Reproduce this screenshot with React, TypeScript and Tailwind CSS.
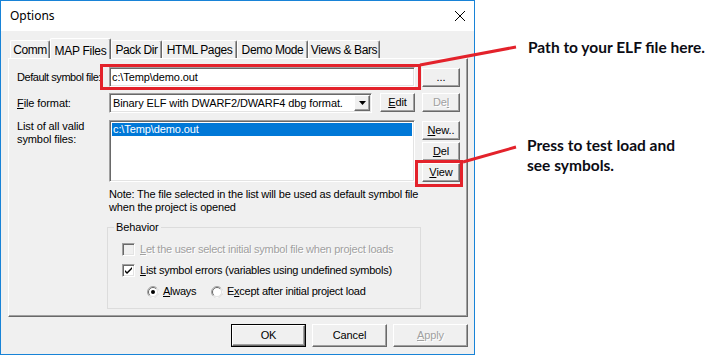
import React from "react";

const raised =
  "bg-[#f0f0f0] border border-t-white border-l-white border-r-[#696969] border-b-[#696969] shadow-[inset_-1px_-1px_0_#a0a0a0]";
const sunken =
  "border border-t-[#a0a0a0] border-l-[#a0a0a0] border-r-white border-b-white shadow-[inset_1px_1px_0_#696969,inset_-1px_-1px_0_#e3e3e3]";
const dis = "text-[#a0a0a0] [text-shadow:1px_1px_0_#fff]";

type BtnProps = {
  children: React.ReactNode;
  className: string;
  disabled?: boolean;
};

const Btn = ({ children, className, disabled }: BtnProps) => (
  <div
    className={`${raised} ${className} flex items-center justify-center ${
      disabled ? dis : "text-black"
    }`}
  >
    {children}
  </div>
);

const Check = ({ checked, disabled }: { checked?: boolean; disabled?: boolean }) => (
  <div
    className={`${sunken} w-[13px] h-[13px] shrink-0 flex items-center justify-center ${
      disabled ? "bg-[#f0f0f0]" : "bg-white"
    }`}
  >
    {checked && (
      <svg width="7" height="7" viewBox="0 0 7 7">
        <path d="M0 3 L2 5 L7 0 L7 2 L2 7 L0 5 Z" fill="#000" />
      </svg>
    )}
  </div>
);

const Radio = ({ checked }: { checked?: boolean }) => (
  <svg width="12" height="12" viewBox="0 0 12 12" className="shrink-0">
    <circle cx="6" cy="6" r="5.5" fill="#fff" stroke="#a0a0a0" />
    <path d="M9.9 2.1 A5.5 5.5 0 0 1 2.1 9.9" fill="none" stroke="#fff" />
    <path d="M2.8 9.2 A4.5 4.5 0 0 1 9.2 2.8" fill="none" stroke="#696969" />
    <path d="M9.2 2.8 A4.5 4.5 0 0 1 2.8 9.2" fill="none" stroke="#e3e3e3" />
    {checked && <circle cx="6" cy="6" r="2" fill="#000" />}
  </svg>
);

const tabs = [
  { label: "Comm", w: "w-[40px]" },
  { label: "MAP Files", w: "w-[61px]", active: true },
  { label: "Pack Dir", w: "w-[51px]" },
  { label: "HTML Pages", w: "w-[75px]" },
  { label: "Demo Mode", w: "w-[71px]" },
  { label: "Views & Bars", w: "w-[72px]" },
];

const App = () => {
  return (
    <div className="relative w-[718px] h-[355px] bg-white flex overflow-hidden font-['Liberation_Sans',Arial,sans-serif] text-[11px] text-black">
      {/* dialog window */}
      <div className="w-[475px] h-[355px] border border-[#1883d7] flex flex-col tracking-[-0.1px]">
        <div className="h-[30px] bg-white flex items-center justify-between px-[9px]">
          <span className="font-['Noto_Sans',sans-serif] text-[12px] tracking-normal">Options</span>
          <svg width="10" height="10" viewBox="0 0 10 10">
            <path d="M0 0 L10 10 M10 0 L0 10" stroke="#000" strokeWidth="1" />
          </svg>
        </div>
        <div className="flex-1 bg-[#f0f0f0] pt-[7px] pl-[7px] pr-[6px] flex flex-col">
          {/* tabs */}
          <div className="relative z-10 h-[20px] flex items-end pl-[2px] whitespace-nowrap">
            {tabs.map((t) =>
              t.active ? (
                <div
                  key={t.label}
                  className={`${t.w} h-[21px] -mb-px bg-[#f0f0f0] border-t border-l border-t-white border-l-white border-r border-r-[#696969] shadow-[inset_-1px_0_0_#a0a0a0] rounded-t-[2px] flex items-start justify-center pt-[3px] text-[12px] tracking-[-0.3px]`}
                >
                  {t.label}
                </div>
              ) : (
                <div
                  key={t.label}
                  className={`${t.w} h-[18px] bg-[#f0f0f0] border-t border-l border-t-white border-l-white border-r border-r-[#696969] shadow-[inset_-1px_0_0_#a0a0a0] rounded-t-[2px] flex items-center justify-center pt-px text-[12px] tracking-[-0.4px]`}
                >
                  {t.label}
                </div>
              )
            )}
          </div>
          {/* panel */}
          <div className="relative w-[460px] h-[259px] border border-t-white border-l-white border-r-[#696969] border-b-[#696969] shadow-[inset_-1px_-1px_0_#a0a0a0] pl-[8px] pt-[8px]">
            <div className="relative flex items-center h-[20px]">
              <div className="w-[92px] whitespace-nowrap tracking-[-0.45px]">Default symbol file:</div>
              <div className={`${sunken} w-[306px] h-[20px] bg-white flex items-center pl-[2px]`}>
                c:\Temp\demo.out
              </div>
              <Btn className="ml-[7px] w-[38px] h-[19px]">...</Btn>
              <div className="absolute left-[83px] top-[-3px] w-[321px] h-[26px] border-[3px] border-[#e3222b]" />
            </div>

            <div className="mt-[6px] flex items-start h-[20px]">
              <div className="w-[92px] h-[20px] flex items-center">
                <span>
                  <u>F</u>ile format:
                </span>
              </div>
              <div className={`${sunken} w-[263px] h-[20px] bg-white flex items-center justify-between pl-[3px] pr-[1px]`}>
                <span className="whitespace-nowrap">Binary ELF with DWARF2/DWARF4 dbg format.</span>
                <div className={`${raised} w-[16px] h-[16px] flex items-center justify-center`}>
                  <svg width="7" height="4" viewBox="0 0 7 4">
                    <path d="M0 0 L7 0 L3.5 4 Z" fill="#000" />
                  </svg>
                </div>
              </div>
              <Btn className="ml-[8px] w-[35px] h-[19px]">
                <span>
                  <u>E</u>dit
                </span>
              </Btn>
              <Btn className="ml-[7px] w-[38px] h-[19px]" disabled>
                <span>
                  De<u>l</u>
                </span>
              </Btn>
            </div>

            <div className="mt-[7px] flex items-start">
              <div className="w-[92px] leading-[13px] whitespace-nowrap">
                List of all valid
                <br />
                symbol files:
              </div>
              <div className={`${sunken} w-[306px] h-[62px] bg-white p-[2px]`}>
                <div className="h-[13px] leading-[13px] bg-[#0078d7] text-white pl-[1px]">
                  c:\Temp\demo.out
                </div>
              </div>
              <div className="ml-[7px] flex flex-col">
                <Btn className="mt-[1px] w-[38px] h-[19px]">
                  <span>
                    <u>N</u>ew..
                  </span>
                </Btn>
                <Btn className="mt-[2px] w-[38px] h-[19px]">
                  <span>
                    <u>D</u>el
                  </span>
                </Btn>
                <div className="relative mt-[2px]">
                  <Btn className="w-[38px] h-[19px]">
                    <span>
                      <u>V</u>iew
                    </span>
                  </Btn>
                  <div className="absolute left-[-7px] top-[-3px] w-[48px] h-[27px] border-[3px] border-[#e3222b]" />
                </div>
              </div>
            </div>

            <div className="mt-[6px] ml-[92px] leading-[13px] whitespace-nowrap tracking-[-0.18px]">
              Note: The file selected in the list will be used as default symbol file
              <br />
              when the project is opened
            </div>

            <fieldset className="mt-[7px] ml-[90px] w-[314px] h-[88px] border border-[#dcdcdc]">
              <legend className="ml-[6px] px-[2px] leading-[13px]">Behavior</legend>
              <div className="pt-[9px] pl-[14px] flex flex-col whitespace-nowrap tracking-[-0.25px]">
                <div className="h-[13px] flex items-center gap-[5px]">
                  <Check disabled />
                  <span className={dis}>
                    <u>L</u>et the user select initial symbol file when project loads
                  </span>
                </div>
                <div className="mt-[8px] h-[13px] flex items-center gap-[5px]">
                  <Check checked />
                  <span>
                    <u>L</u>ist symbol errors (variables using undefined symbols)
                  </span>
                </div>
                <div className="mt-[8px] ml-[25px] h-[13px] flex items-center">
                  <div className="w-[64px] flex items-center gap-[4px]">
                    <Radio checked />
                    <span>
                      <u>A</u>lways
                    </span>
                  </div>
                  <div className="flex items-center gap-[4px]">
                    <Radio />
                    <span>
                      E<u>x</u>cept after initial project load
                    </span>
                  </div>
                </div>
              </div>
            </fieldset>
          </div>

          {/* dialog buttons */}
          <div className="mt-[7px] flex justify-end gap-[6px]">
            <div className="w-[75px] h-[23px] border border-black">
              <Btn className="w-full h-full">OK</Btn>
            </div>
            <Btn className="w-[75px] h-[23px]">Cancel</Btn>
            <Btn className="w-[75px] h-[23px]" disabled>
              <span>
                <u>A</u>pply
              </span>
            </Btn>
          </div>
        </div>
      </div>

      {/* annotations */}
      <div className="flex-1 pl-[52px] pt-[37px] flex flex-col font-['Lato',sans-serif] font-bold text-[15.5px] leading-[20px] text-[#0c0c14]">
        <div className="pl-[1px]">Path to your ELF file here.</div>
        <div className="mt-[78px]">
          Press to test load and
          <br />
          see symbols.
        </div>
      </div>

      <svg
        className="absolute inset-0 pointer-events-none"
        width="718"
        height="355"
        viewBox="0 0 718 355"
      >
        <line x1="420" y1="65" x2="516" y2="47" stroke="#e3222b" strokeWidth="3" />
        <line x1="463" y1="162" x2="516" y2="147" stroke="#e3222b" strokeWidth="3" />
      </svg>
    </div>
  );
};

export default App;
